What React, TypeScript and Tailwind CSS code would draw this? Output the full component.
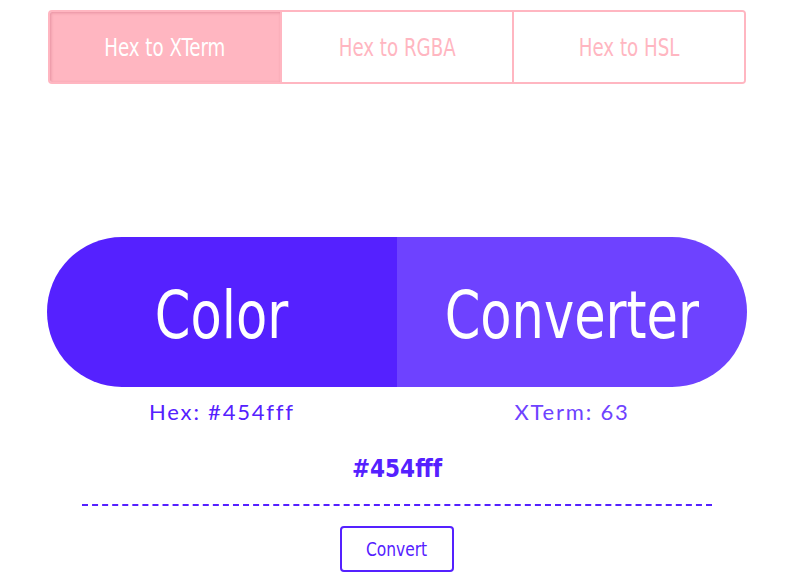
import React from "react";

const narrow = { fontFamily: '"DejaVu Sans Condensed", "Liberation Sans", sans-serif' };

export default function App() {
  const tabs = ["Hex to XTerm", "Hex to RGBA", "Hex to HSL"];
  return (
    <div className="w-[800px] h-[581px] bg-white flex flex-col items-center pr-[6px]" style={narrow}>
      <div className="mt-[10px] w-[698px] h-[74px] flex rounded-[4px] border-2 border-[#ffb6c1] overflow-hidden">
        {tabs.map((t, i) => (
          <div
            key={t}
            className={
              "flex-1 flex items-center justify-center text-[25px] pt-[1px] " +
              (i > 0 ? "border-l-2 border-[#ffb6c1] " : "") +
              (i === 0
                ? "bg-[#ffb6c1] text-white shadow-[inset_1px_1px_3px_rgba(200,100,120,0.45)]"
                : "bg-white text-[#ffb6c1]")
            }
          >
            <span className="inline-block whitespace-nowrap scale-x-[0.81]">{t}</span>
          </div>
        ))}
      </div>

      <div className="mt-[153px] w-[700px] h-[150px] flex rounded-full overflow-hidden">
        <div className="flex-1 bg-[#5521ff] flex items-center justify-center text-white text-[66px] pt-[6px]">
          <span className="inline-block scale-x-[0.86]">Color</span>
        </div>
        <div className="flex-1 bg-[#6e42ff] flex items-center justify-center text-white text-[66px] pt-[6px]">
          <span className="inline-block scale-x-[0.86]">Converter</span>
        </div>
      </div>

      <div className="w-[700px] flex mt-[8px] text-[22px] tracking-[1.8px]" style={{ fontFamily: 'Lato, "Open Sans", sans-serif' }}>
        <div className="flex-1 text-center text-[#5521ff]">Hex: #454fff</div>
        <div className="flex-1 text-center text-[#6e42ff]">XTerm: 63</div>
      </div>

      <div className="mt-[25px] text-[24px] leading-[32px] font-bold text-[#5521ff]">#454fff</div>

      <div className="mt-[19px] w-[630px] border-t-2 border-dashed border-[#5521ff]" />

      <button className="mt-[20px] w-[114px] h-[46px] border-2 border-[#5521ff] rounded-[4px] text-[#5521ff] text-[20px] flex items-center justify-center">
        <span className="inline-block scale-x-[0.86]">Convert</span>
      </button>
    </div>
  );
}
